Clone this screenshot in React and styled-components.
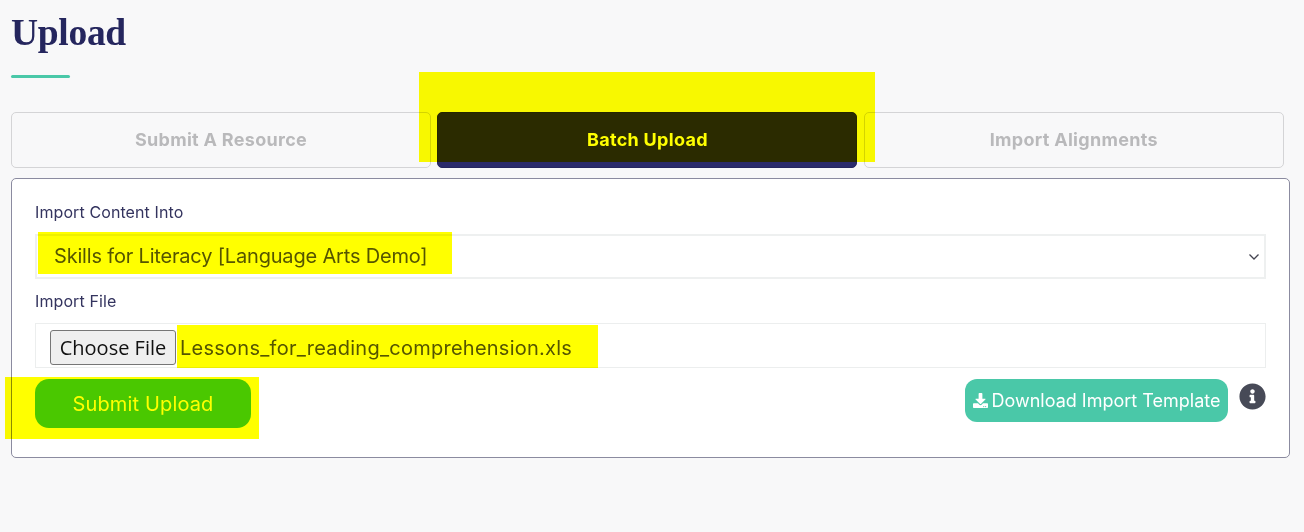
import React from "react";
import styled, { createGlobalStyle } from "styled-components";
import { FaDownload, FaInfoCircle } from "react-icons/fa";

const GlobalStyle = createGlobalStyle`
  html, body {
    margin: 0;
    background: #f8f8f9;
  }
  body {
    font-family: "Inter", "Open Sans", sans-serif;
    color: #25265e;
  }
`;

const Page = styled.div`
  position: relative;
  width: 1304px;
  height: 532px;
  box-sizing: border-box;
  padding: 12px 14px 0 11px;
  overflow: hidden;
`;

const Title = styled.h1`
  margin: 0;
  height: 42px;
  font-family: "Liberation Serif", serif;
  font-size: 37.5px;
  line-height: 42px;
  font-weight: 700;
  letter-spacing: -0.3px;
  color: #25265e;
`;

const TitleRule = styled.div`
  width: 59px;
  height: 3px;
  margin-top: 21px;
  border-radius: 2px;
  background: #4ac8a8;
`;

const Tabs = styled.div`
  display: grid;
  grid-template-columns: 420px 420px 420px;
  column-gap: 6.4px;
  margin-top: 34px;
`;

const Tab = styled.div`
  display: flex;
  align-items: center;
  justify-content: center;
  height: 56px;
  box-sizing: border-box;
  border: 1px solid ${(p) => (p.$active ? "#25265e" : "#d4d4d6")};
  border-radius: 5px;
  background: ${(p) => (p.$active ? "#2b2b6b" : "transparent")};
  color: ${(p) => (p.$active ? "#ffffff" : "#b9b9bb")};
  font-size: 18px;
  font-weight: 700;
  letter-spacing: 0.3px;
  padding-bottom: 1px;
`;

const Panel = styled.div`
  width: 1279px;
  height: 280px;
  box-sizing: border-box;
  margin-top: 10px;
  padding: 23px 24px 0 23px;
  border: 1px solid #8b8ba0;
  border-radius: 5px;
  background: #ffffff;
`;

const Label = styled.div`
  height: 21px;
  font-size: 16px;
  line-height: 21px;
  letter-spacing: 0.1px;
  color: #34345f;
`;

const chevron =
  "data:image/svg+xml,%3Csvg xmlns='http://www.w3.org/2000/svg' width='12' height='8' viewBox='0 0 12 8'%3E%3Cpath d='M1.5 1.5 6 6l4.5-4.5' fill='none' stroke='%23444450' stroke-width='1.3'/%3E%3C/svg%3E";

const SelectBox = styled.select`
  display: block;
  appearance: none;
  width: 1231px;
  height: 45px;
  margin: 11px 0 12px;
  padding: 0 8px 2px 17px;
  box-sizing: border-box;
  border: 2px solid #eef0f0;
  background: #ffffff url("${chevron}") no-repeat right 4px center;
  font-family: inherit;
  font-size: 20px;
  letter-spacing: -0.18px;
  color: #55555c;
  outline: none;
`;

const FileRow = styled.div`
  display: flex;
  align-items: center;
  width: 1231px;
  height: 45px;
  margin-top: 11px;
  padding: 4px 0 0 14px;
  box-sizing: border-box;
  border: 1px solid #eceeee;
`;

const ChooseButton = styled.button`
  width: 126px;
  height: 35px;
  margin-right: 4px;
  padding: 0;
  box-sizing: border-box;
  border: 1px solid #767676;
  border-radius: 3px;
  background: #efefef;
  color: #111111;
  font-family: "Open Sans", sans-serif;
  font-size: 20px;
`;

const FileName = styled.span`
  font-size: 20px;
  letter-spacing: 0.25px;
  color: #55555c;
`;

const Actions = styled.div`
  display: flex;
  align-items: flex-start;
  justify-content: space-between;
  margin-top: 11px;
  width: 1231px;
`;

const SubmitButton = styled.button`
  width: 216px;
  height: 49px;
  border: 0;
  border-radius: 14px;
  background: #4ac8a8;
  color: #ffffff;
  font-family: inherit;
  font-size: 20px;
  letter-spacing: 0.15px;
`;

const RightActions = styled.div`
  display: flex;
  align-items: flex-start;
  gap: 11px;
`;

const DownloadButton = styled.button`
  display: flex;
  align-items: center;
  justify-content: center;
  gap: 4px;
  width: 263px;
  height: 43px;
  padding: 0;
  border: 0;
  border-radius: 12px;
  background: #4ac8a8;
  color: #ffffff;
  font-family: inherit;
  font-size: 18px;
  white-space: nowrap;
`;

const InfoIcon = styled(FaInfoCircle)`
  display: block;
  width: 27px;
  height: 27px;
  margin-top: 4px;
  color: #474a57;
`;

// the yellow marker strokes drawn on top of the screenshot
const Highlight = styled.div`
  position: absolute;
  left: ${(p) => p.$x}px;
  top: ${(p) => p.$y}px;
  width: ${(p) => p.$w}px;
  height: ${(p) => p.$h}px;
  background: #ffff00;
  mix-blend-mode: multiply;
  pointer-events: none;
`;

export default function App() {
  return (
    <Page>
      <GlobalStyle />
      <Title>Upload</Title>
      <TitleRule />
      <Tabs>
        <Tab>Submit A Resource</Tab>
        <Tab $active>Batch Upload</Tab>
        <Tab>Import Alignments</Tab>
      </Tabs>
      <Panel>
        <Label>Import Content Into</Label>
        <SelectBox defaultValue="skills">
          <option value="skills">Skills for Literacy [Language Arts Demo]</option>
        </SelectBox>
        <Label>Import File</Label>
        <FileRow>
          <ChooseButton>Choose File</ChooseButton>
          <FileName>Lessons_for_reading_comprehension.xls</FileName>
        </FileRow>
        <Actions>
          <SubmitButton>Submit Upload</SubmitButton>
          <RightActions>
            <DownloadButton>
              <FaDownload size={15} />
              Download Import Template
            </DownloadButton>
            <InfoIcon />
          </RightActions>
        </Actions>
      </Panel>
      <Highlight $x={419} $y={72} $w={456} $h={90} />
      <Highlight $x={38} $y={232} $w={414} $h={42} />
      <Highlight $x={177} $y={325} $w={421} $h={43} />
      <Highlight $x={5} $y={377} $w={254} $h={62} />
    </Page>
  );
}
